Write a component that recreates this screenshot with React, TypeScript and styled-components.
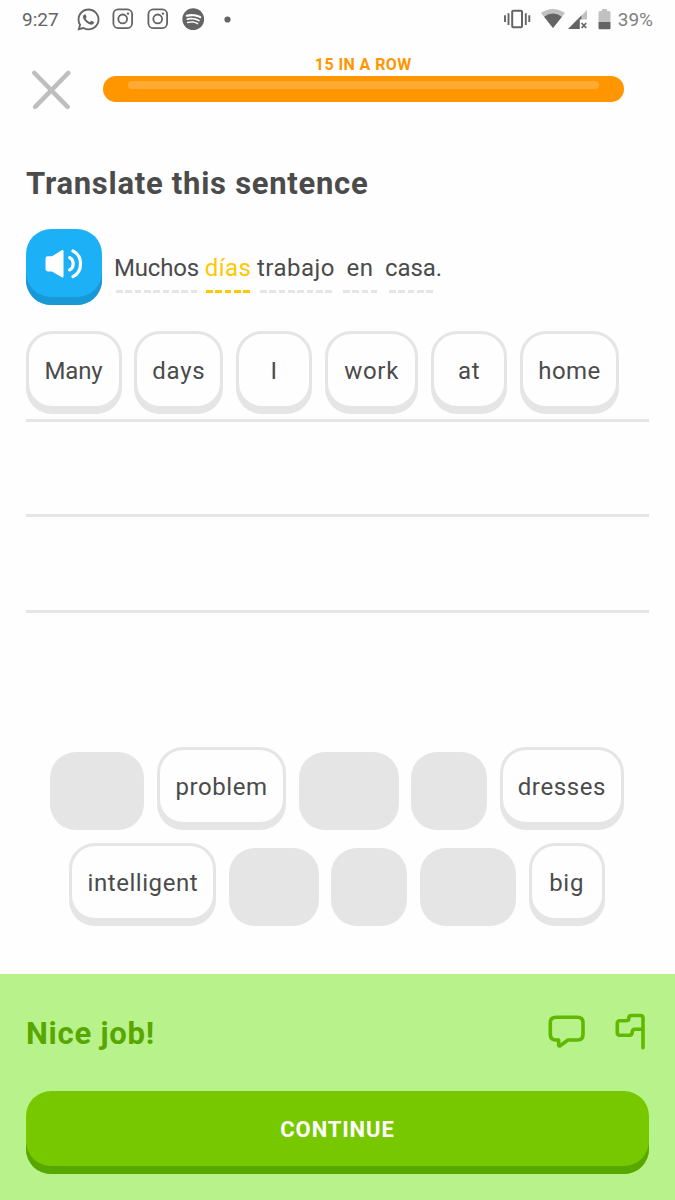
import React from "react";
import styled, { createGlobalStyle } from "styled-components";
import { FaWhatsapp, FaSpotify } from "react-icons/fa";

const Global = createGlobalStyle`
  * { box-sizing: border-box; }
  body { margin: 0; background: #fefefe; }
`;

const Screen = styled.main`
  width: 675px;
  height: 1200px;
  display: flex;
  flex-direction: column;
  background: #fefefe;
  color: #4b4b4b;
  font-family: Roboto, "Liberation Sans", sans-serif;
  overflow: hidden;
`;

const StatusBar = styled.div`
  height: 40px;
  display: flex;
  justify-content: space-between;
  padding: 0 22px;
  font-size: 19px;
  line-height: 42px;
  color: #646464;
`;

const StatusGroup = styled.div`
  display: flex;
  align-items: center;
  height: 38px;
  svg { display: block; flex: none; }
`;

const Clock = styled.span`
  width: 54px;
  height: 40px;
`;

const Battery = styled.span`
  height: 40px;
  margin-left: 7px;
  color: #808080;
`;

const Notification = styled.span<{ $w: number }>`
  width: ${(p) => p.$w}px;
  display: flex;
`;

const Header = styled.header`
  height: 80px;
  display: flex;
  padding-left: 31px;
`;

const CloseButton = styled.button`
  width: 71.5px;
  height: 80px;
  padding: 30px 0 0;
  margin-top: -5px;
  border: 0;
  background: none;
  text-align: left;
  svg { display: block; }
`;

const Progress = styled.div`
  width: 521.5px;
  padding-top: 14px;
`;

const Streak = styled.div`
  height: 22px;
  line-height: 21px;
  text-align: center;
  font-size: 16px;
  font-weight: 700;
  letter-spacing: 0.42px;
  color: #ff9600;
`;

const Bar = styled.div`
  height: 26px;
  border-radius: 13px;
  background: #ff9600;
  padding: 5px 25.5px;
`;

const Shine = styled.div`
  height: 8px;
  border-radius: 4px;
  background: #ffab33;
`;

const Title = styled.h1`
  margin: 44px 0 0 26px;
  height: 40px;
  line-height: 40px;
  font-size: 31px;
  font-weight: 700;
  letter-spacing: 0.72px;
`;

const Prompt = styled.section`
  display: flex;
  height: 77px;
  margin: 25px 0 0 25.5px;
`;

const Speaker = styled.button`
  width: 76.5px;
  height: 76px;
  padding: 0 0 0 19px;
  border: 0;
  border-radius: 25px;
  background: #1cb0f6;
  box-shadow: inset 0 -8px 0 #1899d6;
  svg { display: block; margin-top: -7px; }
`;

const Sentence = styled.div`
  display: flex;
  padding: 22px 0 0 14px;
`;

const Word = styled.span<{ $w: number; $gap: number; $hot?: boolean; $track: number; $indent?: number }>`
  width: ${(p) => p.$w}px;
  margin-right: ${(p) => p.$gap}px;
  padding-left: ${(p) => p.$indent ?? 0}px;
  height: 42px;
  display: flex;
  justify-content: center;
  white-space: nowrap;
  font-size: 24px;
  line-height: 34px;
  letter-spacing: ${(p) => p.$track}px;
  color: ${(p) => (p.$hot ? "#ffc800" : "#4b4b4b")};
  background: repeating-linear-gradient(
      90deg,
      ${(p) => (p.$hot ? "#ffc800" : "#e5e5e5")} 0 6.7px,
      transparent 6.7px 9.35px
    )
    left bottom / 100% 3.4px no-repeat;
`;

const Answer = styled.section`
  margin: 25px 26px 0 25.5px;
`;

const AnswerLine = styled.div<{ $h: number }>`
  height: ${(p) => p.$h}px;
  border-bottom: 3px solid #e5e5e5;
  display: flex;
  gap: 12.8px;
`;

const Tile = styled.button<{ $w: number; $track?: number }>`
  width: ${(p) => p.$w}px;
  height: 78px;
  margin-bottom: 5px;
  flex: none;
  padding: 2px 0 0;
  border: 3px solid #e5e5e5;
  border-radius: 26px;
  box-shadow: 0 5px 0 #e5e5e5;
  background: #fefefe;
  color: #4b4b4b;
  font-family: inherit;
  font-size: 24px;
  line-height: 30px;
  letter-spacing: ${(p) => p.$track ?? 0.7}px;
  text-align: center;
  white-space: nowrap;
`;

const Slot = styled.div<{ $w: number }>`
  width: ${(p) => p.$w}px;
  height: 78px;
  flex: none;
  border-radius: 26px;
  background: #e5e5e5;
`;

const Bank = styled.section`
  height: 227.5px;
  margin-top: 134px;
  display: flex;
  flex-direction: column;
  gap: 12.7px;
`;

const BankRow = styled.div`
  height: 83px;
  margin-right: 1px;
  display: flex;
  justify-content: center;
  align-items: flex-end;
  gap: 12.7px;
`;

const Footer = styled.footer`
  flex: 1;
  padding: 36px 26px 0;
  background: #b8f28b;
`;

const Feedback = styled.div`
  height: 81px;
  display: flex;
  svg { display: block; }
`;

const Praise = styled.h2`
  flex: 1;
  margin: 0;
  font-size: 31px;
  line-height: 48px;
  font-weight: 700;
  letter-spacing: 0.75px;
  color: #58a700;
`;

const IconButton = styled.button<{ $gap?: number }>`
  padding: 0;
  margin: -2px ${(p) => p.$gap ?? 0}px 0 0;
  border: 0;
  background: none;
  height: 46px;
`;

const Continue = styled.button`
  width: 100%;
  height: 83px;
  padding: 0 0 7px;
  border: 0;
  border-radius: 25px;
  background: #78c800;
  box-shadow: inset 0 -8px 0 #58a700;
  font-family: inherit;
  font-size: 22px;
  font-weight: 700;
  letter-spacing: 0.9px;
  color: #fff;
`;

const Instagram = () => (
  <svg width="22" height="22" viewBox="0 0 22 22" fill="none" stroke="#646464">
    <rect x="1.4" y="1.4" width="18.7" height="18.7" rx="4.8" strokeWidth="1.8" />
    <circle cx="10.7" cy="10.9" r="4.4" strokeWidth="1.8" />
    <circle cx="16" cy="5.6" r="1.2" fill="#646464" stroke="none" />
  </svg>
);

const Vibrate = () => (
  <svg width="28" height="22" viewBox="0 0 28 22" fill="none" stroke="#646464">
    <rect x="8.2" y="2.7" width="9.8" height="16.6" rx="1" strokeWidth="2" />
    <path d="M1 7.3v6.6M4.5 5.3v11.6M21.8 5.3v11.6M25.3 7.3v6.6" strokeWidth="1.9" />
  </svg>
);

const Wifi = () => (
  <svg width="25" height="22" viewBox="0 0 25 22">
    <path d="M0 5.1Q12-3.2 24 5.1L12 20Z" fill="#c1c1c1" />
    <path d="M3.1 8.8Q12 2.4 20.9 8.8L12 20Z" fill="#646464" />
  </svg>
);

const Signal = () => (
  <svg width="20" height="22" viewBox="0 0 20 22">
    <path d="M19 2v9.5h-5.2V7.2Z" fill="#c1c1c1" />
    <path d="M0 21 13.6 7.2V11.5h-1.8V21Z" fill="#646464" />
    <path d="m13.6 15 4.6 5m0-5-4.6 5" stroke="#646464" strokeWidth="1.7" />
  </svg>
);

const BatteryIcon = () => (
  <svg width="13" height="22" viewBox="0 0 13 22">
    <path d="M4 1h5v2h2q1.5 0 1.5 1.5V14H.5V4.5Q.5 3 2 3h2Z" fill="#c1c1c1" />
    <path d="M.5 14h12v5.9q0 1.3-1.3 1.3H1.8Q.5 21.2.5 19.9Z" fill="#646464" />
  </svg>
);

export default function App() {
  return (
    <Screen>
      <Global />
      <StatusBar>
        <StatusGroup>
          <Clock>9:27</Clock>
          <Notification $w={36}>
            <FaWhatsapp size={25} />
          </Notification>
          <Notification $w={35}><Instagram /></Notification>
          <Notification $w={34.5}><Instagram /></Notification>
          <Notification $w={42.5}><FaSpotify size={22.5} /></Notification>
          <svg width="7" height="7" viewBox="0 0 7 7">
            <circle cx="3.5" cy="3.5" r="3.1" fill="#646464" />
          </svg>
        </StatusGroup>
        <StatusGroup>
          <Notification $w={37}><Vibrate /></Notification>
          <Notification $w={27}><Wifi /></Notification>
          <Notification $w={30}><Signal /></Notification>
          <BatteryIcon />
          <Battery>39%</Battery>
        </StatusGroup>
      </StatusBar>

      <Header>
        <CloseButton aria-label="Close">
          <svg width="40" height="40" viewBox="0 0 40 40">
            <path d="m3.4 3 33.2 33.8M37.2 3 4.2 36.8" stroke="#bebebe" strokeWidth="4.6" strokeLinecap="round" />
          </svg>
        </CloseButton>
        <Progress>
          <Streak>15 IN A ROW</Streak>
          <Bar><Shine /></Bar>
        </Progress>
      </Header>

      <Title>Translate this sentence</Title>

      <Prompt>
        <Speaker aria-label="Play sentence">
          <svg width="40" height="32" viewBox="0 0 40 32" fill="none">
            <path d="M2.8 8.3H7L16.7 2.3Q18.5 1.3 18.5 3.2V28.3Q18.5 30.2 16.7 29.2L7 23.4H2.8Q.5 23.4.5 21V10.7Q.5 8.3 2.8 8.3Z" fill="#fff" />
            <path d="M24.7 9.7Q28.2 11.5 28.2 15.8T24.7 21.9M28 3Q35.5 6.5 35.5 15.8T28 28.6" stroke="#fff" strokeWidth="3.2" strokeLinecap="round" />
          </svg>
        </Speaker>
        <Sentence>
          <Word $w={81} $gap={9} $track={-0.2}>Muchos</Word>
          <Word $w={44} $gap={10} $track={0.4} $hot>días</Word>
          <Word $w={72} $gap={11} $track={0.5}>trabajo</Word>
          <Word $w={34} $gap={12} $track={0.5}>en</Word>
          <Word $w={44} $gap={0} $track={-0.1} $indent={5}>casa.</Word>
        </Sentence>
      </Prompt>

      <Answer>
        <AnswerLine $h={90.5}>
          <Tile $w={96} $track={-0.2}>Many</Tile>
          <Tile $w={89}>days</Tile>
          <Tile $w={76}>I</Tile>
          <Tile $w={93.5}>work</Tile>
          <Tile $w={76}>at</Tile>
          <Tile $w={99} $track={0.4}>home</Tile>
        </AnswerLine>
        <AnswerLine $h={95.7} />
        <AnswerLine $h={95.7} />
      </Answer>

      <Bank>
        <BankRow>
          <Slot $w={94} />
          <Tile $w={129.5} $track={0.55}>problem</Tile>
          <Slot $w={99.5} />
          <Slot $w={76} />
          <Tile $w={124} $track={0.6}>dresses</Tile>
        </BankRow>
        <BankRow>
          <Tile $w={147} $track={0.55}>intelligent</Tile>
          <Slot $w={89.5} />
          <Slot $w={76} />
          <Slot $w={96} />
          <Tile $w={76}>big</Tile>
        </BankRow>
      </Bank>

      <Footer>
        <Feedback>
          <Praise>Nice job!</Praise>
          <IconButton aria-label="Discuss" $gap={28}>
            <svg width="40" height="46" viewBox="547 1008 40 46" fill="none" stroke="#61b800" strokeWidth="3.6" strokeLinejoin="round">
              <path d="M556 1017.3H577.5Q583 1017.3 583 1022.8V1034.5Q583 1040 577.5 1040H568L560 1045.8Q558.6 1046.3 558.6 1044.8V1040H556Q550.3 1040 550.3 1034.5V1022.8Q550.3 1017.3 556 1017.3Z" />
            </svg>
          </IconButton>
          <IconButton aria-label="Report">
            <svg width="34" height="46" viewBox="615 1008 34 46" fill="none" stroke="#61b800" strokeWidth="3.6" strokeLinecap="round" strokeLinejoin="round">
              <path d="M643 1047.7V1018Q643 1015.5 640.5 1015.5H631.5Q628.8 1015.5 628.8 1018.2Q628.8 1020.8 626 1020.8H620Q617.3 1020.8 617.3 1023.5V1032.5Q617.3 1035.2 620 1035.2H629.5Q632.2 1035.2 632.2 1032.3Q632.2 1029.3 635 1029.3H642" />
            </svg>
          </IconButton>
        </Feedback>
        <Continue>CONTINUE</Continue>
      </Footer>
    </Screen>
  );
}
